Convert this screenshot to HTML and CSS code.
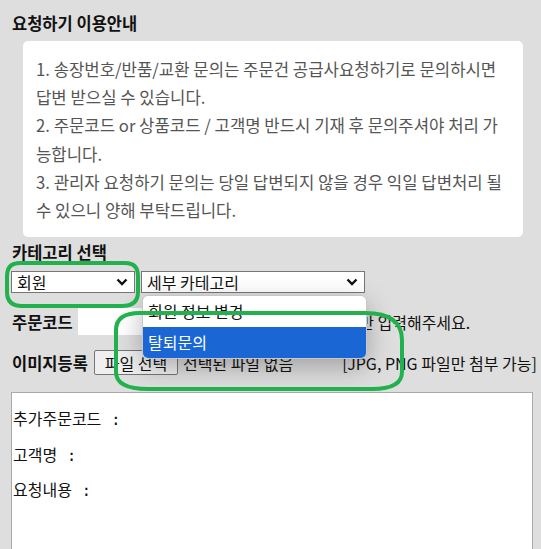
FILE: index.html
```
<html>
  <head>
    <link rel="stylesheet" href="styles.css">
  </head>
  <body>
    <div class="page">
      <div class="title">요청하기 이용안내</div>
      <div class="guide">
        <p>1. 송장번호/반품/교환 문의는 주문건 공급사요청하기로 문의하시면<br>답변 받으실 수 있습니다.</p>
        <p>2. 주문코드 or 상품코드 / 고객명 반드시 기재 후 문의주셔야 처리 가<br>능합니다.</p>
        <p>3. 관리자 요청하기 문의는 당일 답변되지 않을 경우 익일 답변처리 될<br>수 있으니 양해 부탁드립니다.</p>
      </div>

      <div class="label">카테고리 선택</div>
      <div class="row selects">
        <div class="select sel_main">
          <span>회원</span>
          <svg class="chev" width="12" height="8" viewBox="0 0 12 8"><path d="M1.5 1.5 L6 6 L10.5 1.5" fill="none" stroke="#111" stroke-width="2.4"/></svg>
        </div>
        <div class="select sel_sub">
          <span>세부 카테고리</span>
          <svg class="chev" width="12" height="8" viewBox="0 0 12 8"><path d="M1.5 1.5 L6 6 L10.5 1.5" fill="none" stroke="#111" stroke-width="2.4"/></svg>
          <ul class="dropdown">
            <li>회원 정보 변경</li>
            <li class="active">탈퇴문의</li>
          </ul>
        </div>
      </div>

      <div class="row order_row">
        <span class="field_name">주문코드</span>
        <span class="text_input"></span>
        <span class="hint">숫자만 입력해주세요.</span>
      </div>

      <div class="row file_row">
        <span class="field_name">이미지등록</span>
        <span class="file_btn">파일 선택</span>
        <span class="file_none">선택된 파일 없음</span>
        <span class="note">[JPG, PNG 파일만 첨부 가능]</span>
      </div>

      <div class="memo">추가주문코드 :

고객명 :

요청내용 :</div>

      <svg class="marks" width="541" height="549" viewBox="0 0 541 549">
        <path d="M20 263 L125 263 Q138 263 138 276 L138 292 Q138 306 122 306 L22 306 Q7 306 7 292 L7 276 Q7 263 20 263 Z" fill="none" stroke="#22b14c" stroke-width="4"/>
        <path d="M140 313 L365 313 Q402 313 402 340 L402 372 Q402 389 372 389 L148 389 Q116 389 116 372 L116 330 Q116 313 140 313 Z" fill="none" stroke="#22b14c" stroke-width="4"/>
      </svg>
    </div>
  </body>
</html>
```
FILE: styles.css
```
body {
  margin: 0;
  background-color: #dedede;
  font-family: "Noto Sans CJK KR", sans-serif;
  color: #111111;
}

.page {
  position: relative;
  padding: 12px 8px 0 11px;
  overflow: hidden;
  height: 537px;
}

.title {
  font-size: 16.5px;
  font-weight: bold;
  line-height: 22px;
  padding-left: 1px;
}

.guide {
  margin: 7px 10px 0 12px;
  padding: 14px 12px 13px 13px;
  background-color: #ffffff;
  border-radius: 5px;
  color: #555555;
  font-size: 16.7px;
  line-height: 28.2px;
  white-space: nowrap;
}

.guide p {
  margin: 0;
}

.label {
  margin-top: 5px;
  padding-left: 1px;
  font-size: 16.5px;
  font-weight: bold;
  line-height: 20px;
}

.row {
  display: flex;
  align-items: center;
  font-size: 16px;
  white-space: nowrap;
}

.row > * {
  flex-shrink: 0;
}

.selects {
  margin-top: 9px;
  gap: 6px;
}

.select {
  position: relative;
  box-sizing: border-box;
  height: 22px;
  display: flex;
  align-items: center;
  justify-content: space-between;
  padding: 0 6px 0 5px;
  background-color: #ffffff;
  border: 1px solid #767676;
  font-size: 16px;
}

.sel_main {
  width: 124px;
}

.sel_sub {
  width: 224px;
}

.chev {
  display: block;
}

.dropdown {
  position: absolute;
  top: 23px;
  left: 0;
  width: 223px;
  margin: 0;
  padding: 0;
  list-style: none;
  background-color: #ffffff;
  border: 1px solid #c8c8c8;
  border-radius: 6px;
  overflow: hidden;
  box-shadow: 0 8px 26px rgba(0, 0, 0, 0.28);
  z-index: 2;
}

.dropdown li {
  height: 31px;
  line-height: 30px;
  padding-left: 5px;
}

.dropdown li.active {
  background-color: #1a66d5;
  color: #ffffff;
}

.order_row {
  margin-top: 15px;
  height: 27px;
}

.field_name {
  font-weight: bold;
  font-size: 16.5px;
  padding-left: 1px;
}

.text_input {
  width: 247px;
  height: 27px;
  margin-left: 5px;
  background-color: #ffffff;
}

.hint {
  margin-left: 5px;
}

.file_row {
  margin-top: 15px;
  height: 25px;
}

.file_btn {
  box-sizing: border-box;
  width: 84px;
  height: 25px;
  margin-left: 6px;
  display: flex;
  align-items: center;
  justify-content: center;
  background-color: #efefef;
  border: 1px solid #767676;
  border-radius: 2px;
}

.file_none {
  margin-left: 5px;
}

.note {
  margin-left: 49px;
}

.memo {
  margin-top: 17px;
  height: 200px;
  padding: 18px 1px 0 1px;
  background-color: #ffffff;
  border: 1px solid #a9a9a9;
  font-family: "DejaVu Sans Mono", "Noto Sans CJK KR", monospace;
  font-size: 16px;
  line-height: 17.7px;
  white-space: pre;
}

.marks {
  position: absolute;
  top: 0;
  left: 0;
  pointer-events: none;
  z-index: 3;
}
```
